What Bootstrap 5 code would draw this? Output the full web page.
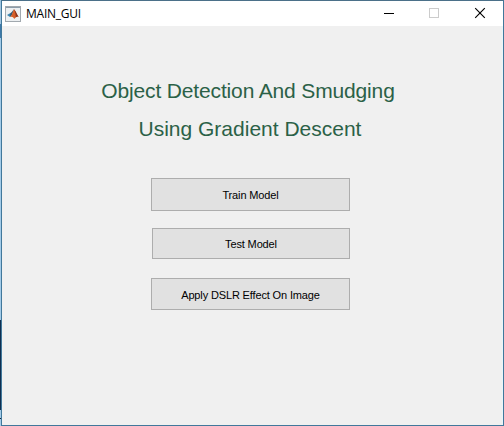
<!DOCTYPE html>
<html lang="en">
<head>
<meta charset="utf-8">
<meta name="viewport" content="width=device-width, initial-scale=1">
<title>MAIN_GUI</title>
<link href="https://cdn.jsdelivr.net/npm/bootstrap@5.3.0/dist/css/bootstrap.min.css" rel="stylesheet">
<style>
body { font-family: "Liberation Sans", Arial, sans-serif; background: #f0f0f0; height: 426px; }
.desktop-edge { width: 1px; background: linear-gradient(#9fc4e0 0 24px, #3d78a8 24px 38px, #a3cbe8 38px 320px, #0f2f50 320px 410px, #a3cbe8 410px 418px, #14263a 418px 419px, #a3cbe8 419px); }
.window { border: 1px solid #41789b; border-top-color: #4b7089; background: #f0f0f0; box-shadow: inset -1px 0 #e8f5fa; }
.titlebar { height: 25px; padding-left: 3px; }
.caption { font-family: "Open Sans", "Noto Sans", sans-serif; font-size: 12px; line-height: 24px; margin-left: 5px; letter-spacing: -.25px; color: #000; }
.control { width: 46px; height: 25px; }
.heading { font-size: 21px; line-height: 38px; color: #2b6147; padding-top: 46px; margin-left: -8px; }
.heading-first { letter-spacing: -.15px; padding-right: 1px; }
.heading-second { padding-left: 3px; }
.actions { width: 199px; margin: 30px 0 0 149px; }
.action { --bs-btn-bg: #e1e1e1; --bs-btn-border-color: #adadad; --bs-btn-color: #000; --bs-btn-hover-bg: #e5f1fb; --bs-btn-hover-border-color: #0078d7; --bs-btn-hover-color: #000; font-size: 11px; line-height: 1; letter-spacing: -.14px; }
.action.action-train, .action.action-test, .action.action-dslr { padding: 2px 0 0; }
.action-train { height: 33px; }
.action-test { height: 31px; margin: 17px 0 19px 1px; }
.action-dslr { height: 32px; }
</style>
<script src="https://cdn.jsdelivr.net/npm/bootstrap@5.3.0/dist/js/bootstrap.bundle.min.js" defer></script>
</head>
<body class="d-flex overflow-hidden">
<div class="desktop-edge flex-shrink-0"></div>
<main class="window flex-grow-1">
  <header class="titlebar d-flex align-items-center bg-white">
    <svg width="16" height="16" viewBox="0 0 16 16" aria-hidden="true">
      <rect x=".5" y=".5" width="15" height="15" fill="#edf0f2" stroke="#a2a9af"/>
      <path d="M1 1.5h14" stroke="#8d9daa"/>
      <path d="M2 9l3.5-2L7 8.5 5 11z" fill="#3b83ad"/>
      <path d="M5.5 7C7 6.5 8 4 9 3.3L7.2 8.7 5 11z" fill="#315570"/>
      <path d="M9 3.2C10.3 4 11.5 8 14 11c-2-1-3 .1-4.8 2C8.4 11.3 7.2 10.5 5 11c2-1.6 3-5.8 4-7.8z" fill="#d65d27"/>
      <path d="M9 3.2c1.3.8 2.5 4.8 5 7.8-1.4-.7-2.3-.4-3.3.4C11 8.5 10 5.5 9 3.2z" fill="#86331f"/>
    </svg>
    <span class="caption">MAIN_GUI</span>
    <div class="d-flex ms-auto">
      <svg class="control" viewBox="0 0 46 25" aria-label="Minimize"><path d="M19 12.5h10" stroke="#000" shape-rendering="crispEdges"/></svg>
      <svg class="control" viewBox="0 0 46 25" aria-label="Maximize"><rect x="18.5" y="7.5" width="9" height="9" fill="none" stroke="#ccc" shape-rendering="crispEdges"/></svg>
      <svg class="control" viewBox="0 0 46 25" aria-label="Close"><path d="M18.2 7.2l9.6 9.6M27.8 7.2l-9.6 9.6" fill="none" stroke="#000" stroke-width="1.15"/></svg>
    </div>
  </header>
  <h1 class="heading text-center fw-normal mb-0"><span class="heading-first d-block">Object Detection And Smudging</span><span class="heading-second d-block">Using Gradient Descent</span></h1>
  <div class="actions d-flex flex-column">
    <button type="button" class="btn action action-train rounded-0">Train Model</button>
    <button type="button" class="btn action action-test rounded-0">Test Model</button>
    <button type="button" class="btn action action-dslr rounded-0">Apply DSLR Effect On Image</button>
  </div>
</main>
</body>
</html>
